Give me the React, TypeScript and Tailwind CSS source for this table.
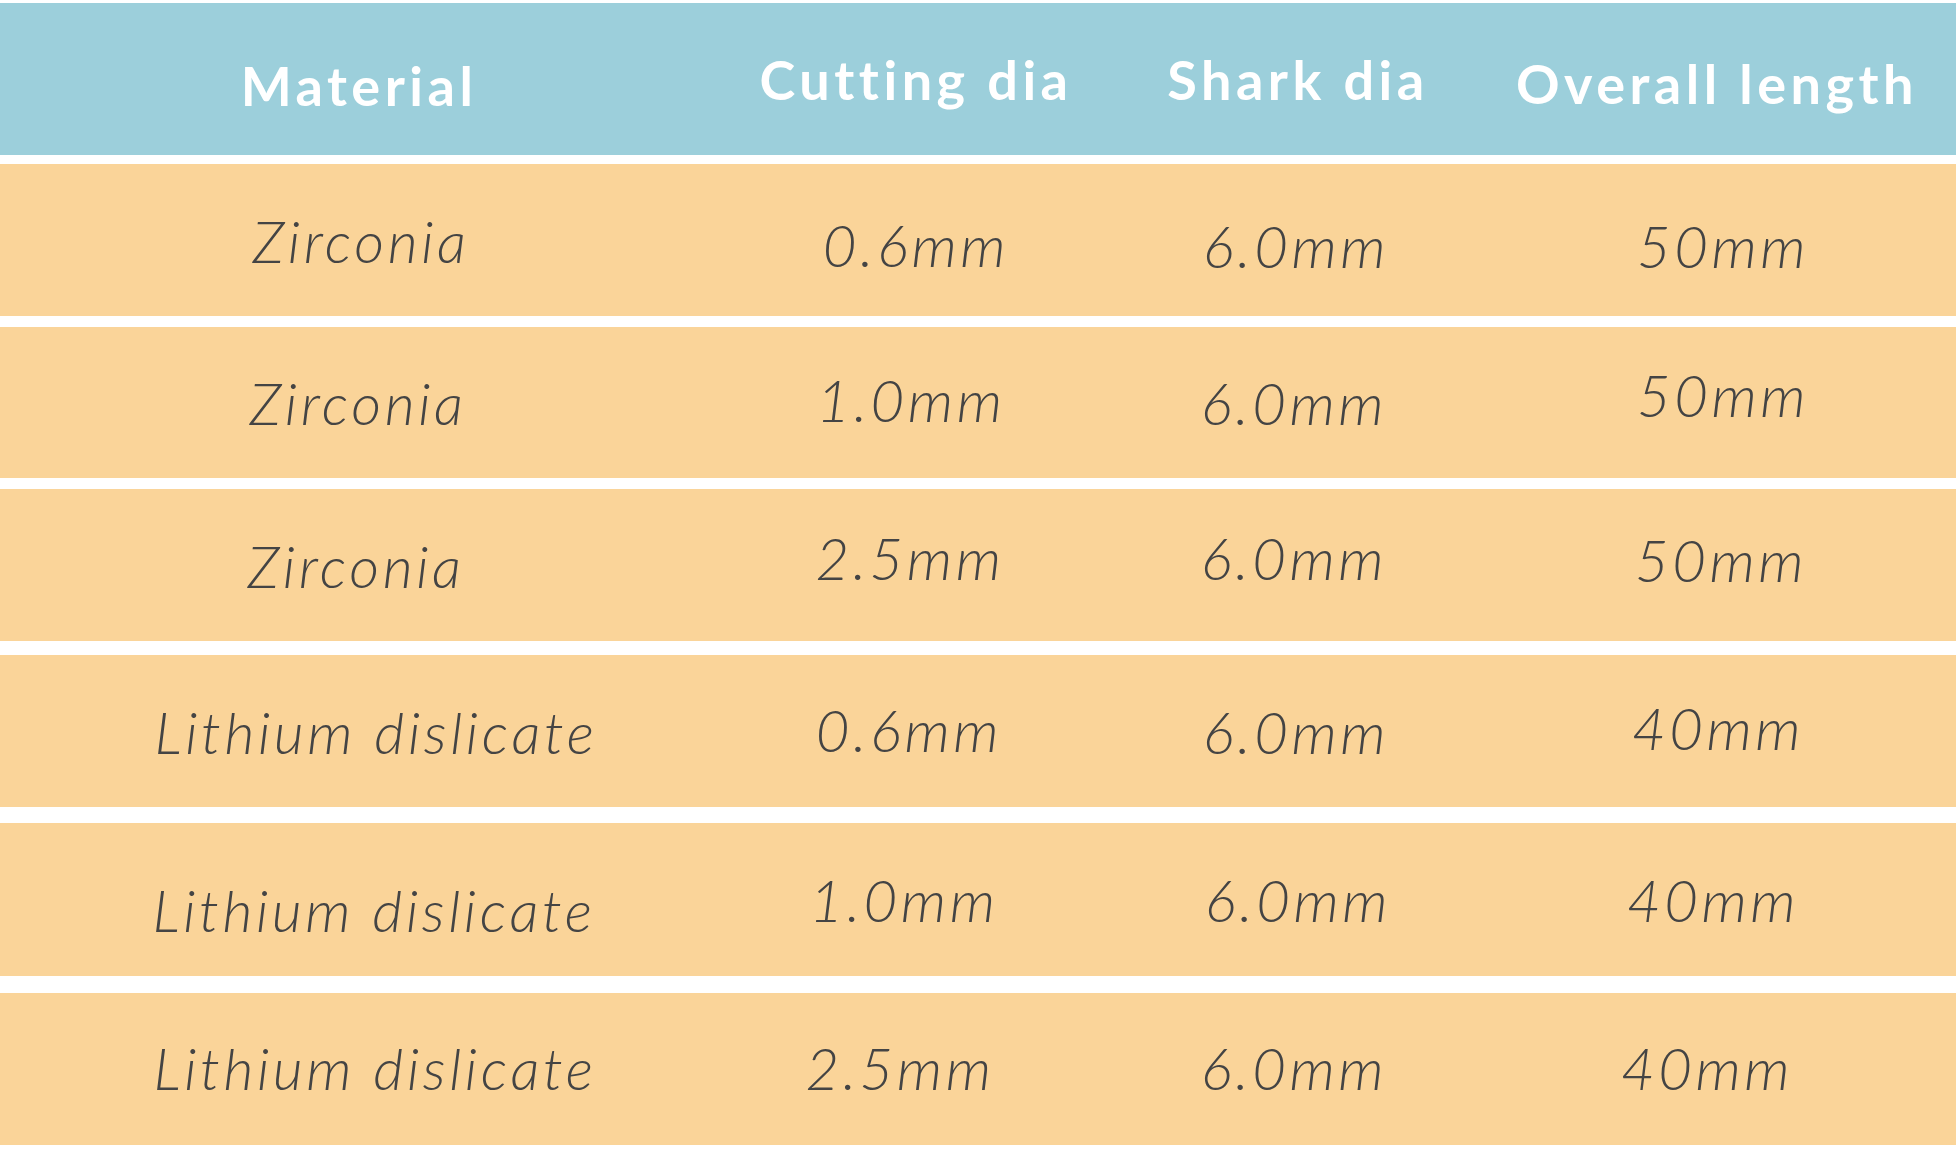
import React from "react";

const cols = "grid grid-cols-[730px_372px_380px_474px]";

type Cell = [string, string];

const rows: { cells: Cell[]; cls: string }[] = [
  {
    cls: "mt-[9px] h-[152px]",
    cells: [
      ["Zirconia", "pr-[8px]"],
      ["0.6mm", "pt-[8px]"],
      ["6.0mm", "pl-[8px] pt-[10px]"],
      ["50mm", "pl-[8px] pt-[10px]"],
    ],
  },
  {
    cls: "mt-[11px] h-[151px]",
    cells: [
      ["Zirconia", "pr-[14px]"],
      ["1.0mm", "pr-[10px] pb-[6px]"],
      ["6.0mm", "pl-[4px]"],
      ["50mm", "pl-[8px] pb-[16px]"],
    ],
  },
  {
    cls: "mt-[11px] h-[152px]",
    cells: [
      ["Zirconia", "pr-[18px]"],
      ["2.5mm", "pr-[12px] pb-[16px]"],
      ["6.0mm", "pl-[4px] pb-[16px]"],
      ["50mm", "pl-[4px] pb-[12px]"],
    ],
  },
  {
    cls: "mt-[14px] h-[152px]",
    cells: [
      ["Lithium dislicate", "pl-[22px]"],
      ["0.6mm", "pr-[14px] pb-[4px]"],
      ["6.0mm", "pl-[8px]"],
      ["40mm", "pr-[2px] pb-[8px]"],
    ],
  },
  {
    cls: "mt-[16px] h-[153px]",
    cells: [
      ["Lithium dislicate", "pl-[18px] pt-[20px]"],
      ["1.0mm", "pr-[24px]"],
      ["6.0mm", "pl-[12px]"],
      ["40mm", "pr-[12px]"],
    ],
  },
  {
    cls: "mt-[17px] h-[152px]",
    cells: [
      ["Lithium dislicate", "pl-[20px] pb-[4px]"],
      ["2.5mm", "pr-[32px] pb-[4px]"],
      ["6.0mm", "pl-[4px] pb-[4px]"],
      ["40mm", "pr-[24px] pb-[4px]"],
    ],
  },
];

const header: Cell[] = [
  ["Material", "pr-[12px] pt-[12px]"],
  ["Cutting dia", ""],
  ["Shark dia", "pl-[12px]"],
  ["Overall length", "pr-[4px] pt-[8px]"],
];

export default function App() {
  return (
    <div className="w-[1956px] h-[1158px] bg-white flex flex-col pt-[3px] overflow-hidden font-['Lato','Liberation_Sans',sans-serif]">
      <div className={`${cols} h-[152px] bg-[#9ccfdb] text-white font-bold text-[54px] tracking-[4.5px]`}>
        {header.map(([t, c], j) => (
          <div key={j} className={`flex items-center justify-center whitespace-nowrap ${c}`}>{t}</div>
        ))}
      </div>
      {rows.map((r, i) => (
        <div key={i} className={`${cols} ${r.cls} bg-[#fad499] text-[#444444] italic font-light text-[58px] tracking-[3.6px]`}>
          {r.cells.map(([t, c], j) => (
            <div key={j} className={`flex items-center justify-center whitespace-nowrap ${c}`}>{t}</div>
          ))}
        </div>
      ))}
    </div>
  );
}
